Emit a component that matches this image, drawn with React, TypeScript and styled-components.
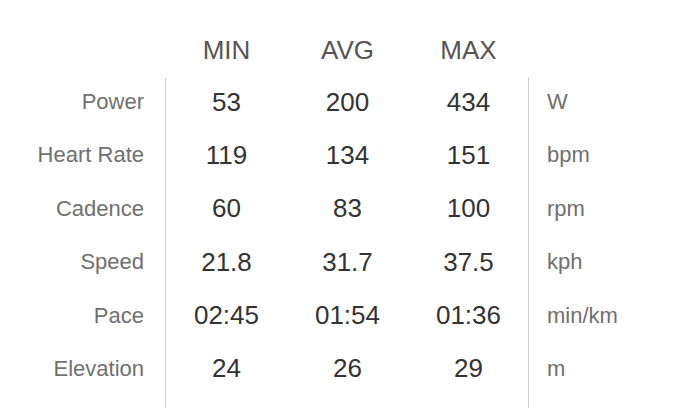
import React, { FC } from 'react';
import styled, { createGlobalStyle } from 'styled-components';

const GlobalStyle = createGlobalStyle`
  html, body {
    margin: 0;
    padding: 0;
    background: #ffffff;
  }

  body {
    font-family: 'Liberation Sans', Arial, Helvetica, sans-serif;
    -webkit-font-smoothing: antialiased;
  }
`;

const StyledStatsTable = styled.div`
  width: 675px;
  height: 408px;
  overflow: hidden;
  background: #fff;
`;

const HeaderRow = styled.div`
  display: grid;
  grid-template-columns: 166px repeat(3, 121px) 1fr;
  height: 78px;
  box-sizing: border-box;
  padding-top: 30px;
`;

const HeaderCell = styled.div`
  height: 40px;
  line-height: 40px;
  text-align: center;
  font-size: 26px;
  color: #555;
`;

const Body = styled.div`
  display: grid;
  grid-template-columns: 166px repeat(3, 121px) 1fr;
`;

const Column = styled.div<{ $divided?: boolean }>`
  display: flex;
  flex-direction: column;
  padding-bottom: 20px;
  border-left: ${({ $divided }) => ($divided ? '1px solid #cbcbcb' : 'none')};
  margin-left: ${({ $divided }) => ($divided ? '-1px' : '0')};
`;

const Cell = styled.div<{ $kind: 'label' | 'value' | 'unit' }>`
  display: flex;
  align-items: center;
  height: 53.4px;
  box-sizing: border-box;
  padding-bottom: 5.4px;
  white-space: nowrap;

  ${({ $kind }) =>
    $kind === 'label' &&
    `
    justify-content: flex-end;
    padding-right: 22px;
    font-size: 22px;
    color: #707070;
  `}

  ${({ $kind }) =>
    $kind === 'value' &&
    `
    justify-content: center;
    font-size: 26px;
    color: #333;
  `}

  ${({ $kind }) =>
    $kind === 'unit' &&
    `
    justify-content: flex-start;
    padding-left: 18px;
    font-size: 22px;
    color: #707070;
  `}
`;

interface Stat {
  label: string;
  min: string;
  avg: string;
  max: string;
  unit: string;
}

const stats: Stat[] = [
  { label: 'Power', min: '53', avg: '200', max: '434', unit: 'W' },
  { label: 'Heart Rate', min: '119', avg: '134', max: '151', unit: 'bpm' },
  { label: 'Cadence', min: '60', avg: '83', max: '100', unit: 'rpm' },
  { label: 'Speed', min: '21.8', avg: '31.7', max: '37.5', unit: 'kph' },
  { label: 'Pace', min: '02:45', avg: '01:54', max: '01:36', unit: 'min/km' },
  { label: 'Elevation', min: '24', avg: '26', max: '29', unit: 'm' },
];

const StatsTable: FC = () => (
  <StyledStatsTable>
    <HeaderRow>
      <div />
      <HeaderCell>MIN</HeaderCell>
      <HeaderCell>AVG</HeaderCell>
      <HeaderCell>MAX</HeaderCell>
      <div />
    </HeaderRow>
    <Body>
      <Column>
        {stats.map((s) => (
          <Cell key={s.label} $kind="label">
            {s.label}
          </Cell>
        ))}
      </Column>
      <Column $divided>
        {stats.map((s) => (
          <Cell key={s.label} $kind="value">
            {s.min}
          </Cell>
        ))}
      </Column>
      <Column>
        {stats.map((s) => (
          <Cell key={s.label} $kind="value">
            {s.avg}
          </Cell>
        ))}
      </Column>
      <Column>
        {stats.map((s) => (
          <Cell key={s.label} $kind="value">
            {s.max}
          </Cell>
        ))}
      </Column>
      <Column $divided>
        {stats.map((s) => (
          <Cell key={s.label} $kind="unit">
            {s.unit}
          </Cell>
        ))}
      </Column>
    </Body>
  </StyledStatsTable>
);

const App: FC = () => (
  <>
    <GlobalStyle />
    <StatsTable />
  </>
);

export default App;
